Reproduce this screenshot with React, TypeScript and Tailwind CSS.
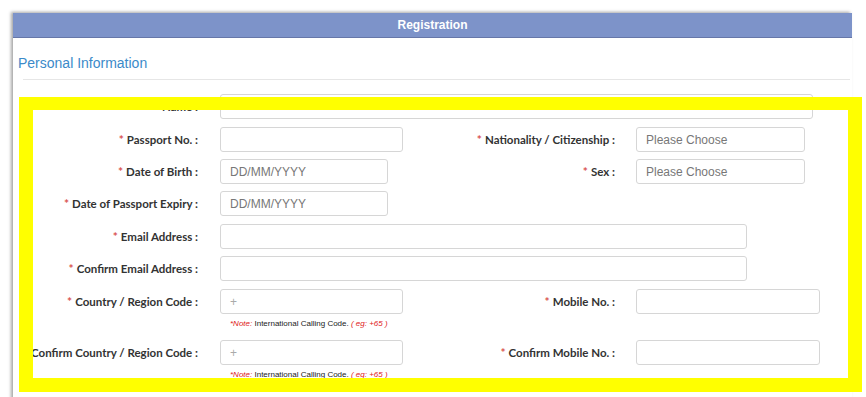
import React from 'react';

function Req() {
  return <span className="text-[#d9534f] text-[12px] leading-none mr-[3px] self-start mt-[7px]">*</span>;
}

function Label({ text, req = true, w }: { text: string; req?: boolean; w: string }) {
  return (
    <div className={`${w} h-[25px] shrink-0 flex items-center justify-end font-['Lato','Noto_Sans',sans-serif] text-[11.5px] font-bold text-[#333] leading-none whitespace-nowrap`}>
      {req && <Req />}
      <span>{text}</span>
    </div>
  );
}

function Input({ w, placeholder, light }: { w: string; placeholder?: string; light?: boolean }) {
  return (
    <div className={`${w} h-[25px] shrink-0 border border-[#d6d6d6] rounded-[3px] bg-white flex items-center pl-[9px]`}>
      {placeholder && (
        <span className={`font-['Liberation_Sans',Arial,sans-serif] text-[12px] leading-none ${light ? 'text-[#aaa]' : 'text-[#777]'}`}>{placeholder}</span>
      )}
    </div>
  );
}

function Note() {
  return (
    <div className="font-['Liberation_Sans',Arial,sans-serif] text-[8px] leading-[11px] text-[#222] pl-[10px] mt-[4px] whitespace-nowrap">
      <span className="text-[#e02020] italic">*Note:</span> International Calling Code. <span className="text-[#e02020] italic">( eg: +65 )</span>
    </div>
  );
}

export default function App() {
  return (
    <div className="relative w-[866px] h-[397px] bg-white overflow-hidden">
      <div className="ml-[13px] mt-[13px] w-[839px] h-[390px] shadow-[-2px_-1px_3px_rgba(0,0,0,0.35)] bg-white">
        {/* header */}
        <div className="h-[25px] bg-[#7d93c9] border-b border-[#6677a8] flex items-center justify-center">
          <span className="text-white font-bold text-[12px] font-['Liberation_Sans',Arial,sans-serif]">Registration</span>
        </div>

        {/* section title */}
        <div className="pl-[5px] pt-[16px] text-[14px] leading-[18px] text-[#3b8ac9] font-['Liberation_Sans',Arial,sans-serif]">
          Personal Information
        </div>
        <div className="ml-[10px] mr-[2px] mt-[7px] border-b border-[#e6e6e6]"></div>

        {/* form */}
        <div className="flex flex-col mt-[14px]">
          <div className="flex items-start">
            <Label w="w-[185px]" text="Name :" />
            <div className="ml-[22px]"><Input w="w-[593px]" /></div>
          </div>

          <div className="flex items-start mt-[8px]">
            <Label w="w-[185px]" text="Passport No. :" />
            <div className="ml-[22px] w-[213px]"><Input w="w-[183px]" /></div>
            <Label w="w-[182px]" text="Nationality / Citizenship :" />
            <div className="ml-[21px]"><Input w="w-[169px]" placeholder="Please Choose" /></div>
          </div>

          <div className="flex items-start mt-[7px]">
            <Label w="w-[185px]" text="Date of Birth :" />
            <div className="ml-[22px] w-[213px]"><Input w="w-[168px]" placeholder="DD/MM/YYYY" /></div>
            <Label w="w-[182px]" text="Sex :" />
            <div className="ml-[21px]"><Input w="w-[169px]" placeholder="Please Choose" /></div>
          </div>

          <div className="flex items-start mt-[7px]">
            <Label w="w-[185px]" text="Date of Passport Expiry :" />
            <div className="ml-[22px]"><Input w="w-[168px]" placeholder="DD/MM/YYYY" /></div>
          </div>

          <div className="flex items-start mt-[8px]">
            <Label w="w-[185px]" text="Email Address :" />
            <div className="ml-[22px]"><Input w="w-[527px]" /></div>
          </div>

          <div className="flex items-start mt-[7px]">
            <Label w="w-[185px]" text="Confirm Email Address :" />
            <div className="ml-[22px]"><Input w="w-[527px]" /></div>
          </div>

          <div className="flex items-start mt-[8px]">
            <Label w="w-[185px]" text="Country / Region Code :" />
            <div className="ml-[22px] w-[213px]">
              <Input w="w-[183px]" placeholder="+" light />
              <Note />
            </div>
            <Label w="w-[182px]" text="Mobile No. :" />
            <div className="ml-[21px]"><Input w="w-[184px]" /></div>
          </div>

          <div className="flex items-start mt-[11px]">
            <Label w="w-[185px]" text="Confirm Country / Region Code :" req={false} />
            <div className="ml-[22px] w-[213px]">
              <Input w="w-[183px]" placeholder="+" light />
              <Note />
            </div>
            <Label w="w-[182px]" text="Confirm Mobile No. :" />
            <div className="ml-[21px]"><Input w="w-[184px]" /></div>
          </div>
        </div>
      </div>

      {/* yellow highlight frame */}
      <div className="absolute left-[19px] top-[97px] w-[843px] h-[295px] border-[14px] border-t-[13px] border-[#ffff00] pointer-events-none"></div>
    </div>
  );
}
